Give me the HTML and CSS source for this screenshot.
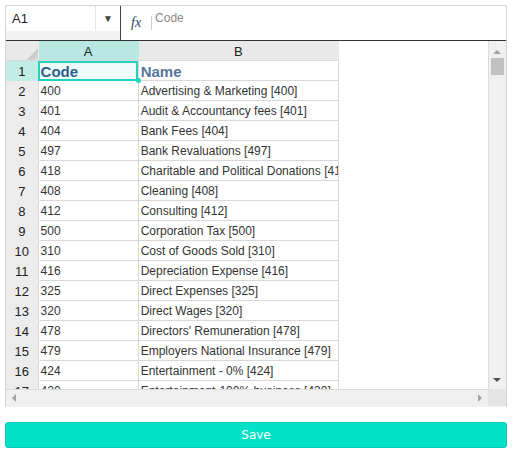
FILE: index.html
```html
<!DOCTYPE html>
<html lang="en">
<head>
    <meta charset="UTF-8">
    <title>Account Codes</title>
    <link rel="stylesheet" href="styles.css">
</head>
<body>

<div class="sheet">
    <!-- Formula bar -->
    <div class="formula-bar">
        <div class="namebox">
            <div class="name-input">A1</div>
            <div class="name-drop">&#9660;</div>
        </div>
        <div class="fx-area">
            <span class="fx">fx</span>
            <span class="fx-sep"></span>
            <span class="fx-value">Code</span>
        </div>
    </div>

    <!-- Grid -->
    <div class="grid-wrap">
        <div class="grid-view">
            <table class="grid">
                <colgroup>
                    <col class="col-rh">
                    <col class="col-a">
                    <col class="col-b">
                </colgroup>
                <thead>
                    <tr>
                        <th class="corner-cell"></th>
                        <th class="active">A</th>
                        <th>B</th>
                    </tr>
                </thead>
                <tbody id="rows">
                    <tr class="title-row">
                        <th class="active">1</th>
                        <td class="selected">Code<span class="handle"></span></td>
                        <td>Name</td>
                    </tr>
                </tbody>
            </table>
        </div>
        <div class="vscroll">
            <span class="arrow up"></span>
            <span class="thumb"></span>
            <span class="arrow down"></span>
        </div>
    </div>
    <div class="hscroll-row">
        <div class="hscroll">
            <span class="arrow left"></span>
            <span class="arrow right"></span>
        </div>
        <div class="scroll-corner"></div>
    </div>
</div>

<button type="button" class="save">Save</button>

<script>
    // Account list shown in the sheet
    const accounts = [
        ['400', 'Advertising & Marketing [400]'],
        ['401', 'Audit & Accountancy fees [401]'],
        ['404', 'Bank Fees [404]'],
        ['497', 'Bank Revaluations [497]'],
        ['418', 'Charitable and Political Donations [418]'],
        ['408', 'Cleaning [408]'],
        ['412', 'Consulting [412]'],
        ['500', 'Corporation Tax [500]'],
        ['310', 'Cost of Goods Sold [310]'],
        ['416', 'Depreciation Expense [416]'],
        ['325', 'Direct Expenses [325]'],
        ['320', 'Direct Wages [320]'],
        ['478', 'Directors\' Remuneration [478]'],
        ['479', 'Employers National Insurance [479]'],
        ['424', 'Entertainment - 0% [424]'],
        ['420', 'Entertainment-100% business [420]']
    ];
    const tbody = document.getElementById('rows');
    accounts.forEach(function (acc, i) {
        const tr = document.createElement('tr');
        tr.innerHTML = '<th>' + (i + 2) + '</th><td></td><td></td>';
        tr.children[1].textContent = acc[0];
        tr.children[2].textContent = acc[1];
        tbody.appendChild(tr);
    });
</script>

</body>
</html>
```

FILE: styles.css
```css
body {
    margin: 0;
    padding: 5px 0 0 5px;
    font-family: "Liberation Sans", Arial, sans-serif;
    background: #fff;
}
.sheet {
    width: 500px;
    border: 1px solid #d4d4d4;
    border-bottom-color: #f0f0f0;
}
.formula-bar {
    display: flex;
    height: 34px;
    border-bottom: 1px solid #333;
}
.namebox {
    display: flex;
    width: 114px;
    background: #f2f2f2;
    height: 34px;
}
.name-input {
    width: 90px;
    height: 25px;
    background: #fff;
    border-right: 1px solid #e4e4e4;
    font-size: 13px;
    color: #222;
    line-height: 25px;
    padding-left: 6px;
    box-sizing: border-box;
}
.name-drop {
    width: 24px;
    height: 25px;
    background: #fff;
    font-size: 10px;
    color: #444;
    text-align: center;
    line-height: 25px;
}
.fx-area {
    flex: 1;
    display: flex;
    align-items: flex-start;
    border-left: 1px solid #444;
}
.fx {
    font-family: "Liberation Serif", "Times New Roman", serif;
    font-style: italic;
    font-size: 14px;
    color: #2a3f66;
    margin: 9px 0 0 10px;
}
.fx-sep {
    width: 1px;
    height: 14px;
    background: #ccc;
    margin: 10px 0 0 10px;
}
.fx-value {
    font-size: 12px;
    color: #8a8a8a;
    margin: 5px 0 0 3px;
}
.grid-wrap {
    display: flex;
    height: 348px;
}
.grid-view {
    flex: 1;
    overflow: hidden;
}
.grid {
    width: 333px;
    border-collapse: collapse;
    table-layout: fixed;
    font-size: 12px;
}
.col-rh { width: 32px; }
.col-a { width: 100px; }
.col-b { width: 200px; }
.grid th,
.grid td {
    height: 18px;
    padding: 1px 0 0;
    border: 1px solid #d8d8d8;
    white-space: nowrap;
    overflow: hidden;
}
.grid thead th {
    background: #e9e9e9;
    font-weight: normal;
    font-size: 13px;
    color: #222;
    border-top: none;
    border-color: #e9e9e9;
    border-bottom-color: #d8d8d8;
}
.grid thead th.active {
    background: #b9e8e2;
    border-color: #b9e8e2;
    border-bottom-color: #d8d8d8;
}
.grid .corner-cell {
    border-left: none;
    background: linear-gradient(135deg, #e9e9e9 78%, #c8c8c8 78%, #dcdcdc 100%);
}
.grid tbody th {
    background: #ececec;
    font-weight: normal;
    font-size: 13px;
    color: #222;
    border-left: none;
    border-color: #ececec;
    border-right-color: #d8d8d8;
}
.grid tbody th.active {
    background: #c3ece7;
    border-color: #c3ece7;
    border-right-color: #d8d8d8;
}
.grid td {
    color: #333;
    padding-left: 2px;
}
.title-row td {
    font-size: 15px;
    font-weight: bold;
    color: #55769a;
}
.title-row td.selected {
    position: relative;
    overflow: visible;
    background: #effbf9;
    color: #2d5f8b;
    outline: 2px solid #22d3bd;
    outline-offset: -2px;
}
.handle {
    position: absolute;
    right: -3px;
    bottom: -3px;
    width: 5px;
    height: 5px;
    border-radius: 50%;
    background: #22d3bd;
}
.vscroll {
    position: relative;
    width: 17px;
    background: #f0f0f0;
    border-left: 1px solid #dcdcdc;
}
.thumb {
    position: absolute;
    left: 2px;
    top: 17px;
    width: 13px;
    height: 17px;
    background: #c1c1c1;
}
.arrow {
    position: absolute;
    width: 0;
    height: 0;
    border: 4px solid transparent;
}
.arrow.up {
    left: 4px;
    top: 5px;
    border-bottom-color: #a3a3a3;
}
.arrow.down {
    left: 4px;
    bottom: 3px;
    border-top-color: #505050;
}
.hscroll-row {
    display: flex;
    height: 17px;
}
.hscroll {
    position: relative;
    flex: 1;
    background: #f0f0f0;
    border-top: 1px solid #dcdcdc;
}
.arrow.left {
    left: 2px;
    top: 4px;
    border-right-color: #a3a3a3;
}
.arrow.right {
    right: 2px;
    top: 4px;
    border-left-color: #a3a3a3;
}
.scroll-corner {
    width: 18px;
    background: #e4e4e4;
}
.save {
    display: block;
    width: 502px;
    height: 26px;
    margin-top: 15px;
    border: 1px solid #00cdb3;
    border-radius: 3px;
    background: #00e1c6;
    color: #fff;
    font-family: "DejaVu Sans", Verdana, sans-serif;
    font-size: 12px;
    cursor: pointer;
}
```
